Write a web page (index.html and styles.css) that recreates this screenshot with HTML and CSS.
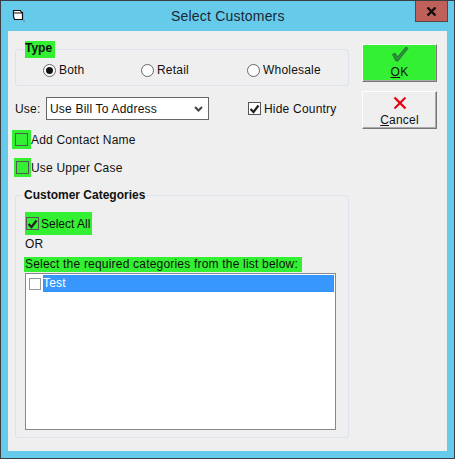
FILE: index.html
```html
<!DOCTYPE html>
<html lang="en">
<head>
<meta charset="utf-8">
<title>Select Customers</title>
<link rel="stylesheet" href="styles.css">
</head>
<body>
<div class="window">
  <header class="titlebar">
    <svg class="app-icon" width="13" height="13" viewBox="0 0 13 13"><path d="M1.500 1.500h7l1 2h1v7h-8l-1-3z" fill="#fff" stroke="#111" stroke-width="1.200"/><path d="M2 4h8" stroke="#111"/><path d="M12 11v2" stroke="#777"/></svg>
    <span class="title">Select Customers</span>
    <span class="close"><svg width="11" height="9" viewBox="0 0 11 9"><path d="M1.500 .5l8 8M9.500 .5l-8 8" stroke="#111" stroke-width="2.400"/></svg></span>
  </header>
  <div class="client">
    <main class="left">
      <section class="group type-group">
        <div class="legend green type-legend">Type</div>
        <div class="radios">
          <span class="radio-item r1"><i class="radio on"></i>Both</span>
          <span class="radio-item r2"><i class="radio"></i>Retail</span>
          <span class="radio-item r3"><i class="radio"></i>Wholesale</span>
        </div>
      </section>
      <div class="use-row">
        <span class="use-label">Use:</span>
        <span class="select">Use Bill To Address<svg width="9" height="6" viewBox="0 0 9 6"><path d="M1 1l3.500 3.500L8 1" fill="none" stroke="#444" stroke-width="2"/></svg></span>
        <span class="check-item hide"><i class="check"><svg width="11" height="10" viewBox="0 0 11 10"><path d="M1.500 5l3 3 5-6.500" fill="none" stroke="#222" stroke-width="2.200"/></svg></i>Hide Country</span>
      </div>
      <div class="opt opt1"><span class="green swatch s1"><i class="check clear"></i></span>Add Contact Name</div>
      <div class="opt opt2"><span class="green swatch s2"><i class="check clear"></i></span>Use Upper Case</div>
      <section class="group cat-group">
        <div class="legend cat-legend">Customer Categories</div>
        <div class="green select-all"><i class="check clear"><svg width="11" height="10" viewBox="0 0 11 10"><path d="M1.500 5l3 3 5-6.500" fill="none" stroke="#222" stroke-width="2.200"/></svg></i>Select All</div>
        <div class="or">OR</div>
        <div class="green hint">Select the required categories from the list below:</div>
        <div class="list">
          <div class="list-row"><i class="list-check"></i><span class="list-text">Test</span></div>
        </div>
      </section>
    </main>
    <aside class="right">
      <button class="btn ok"><svg width="18" height="16" viewBox="0 0 18 16"><path d="M1.500 8.500L4 7l2.500 4L15 1l2 1.500L7 15H5z" fill="#2f8f3a" stroke="#1d6b2c" stroke-width=".8"/></svg><span><u>O</u>K</span></button>
      <button class="btn cancel"><svg width="14" height="14" viewBox="0 0 14 14"><path d="M1.500 1.500l11 11" stroke="#f00010" stroke-width="2.400"/><path d="M12.500 1.500l-11 11" stroke="#e00010" stroke-width="2"/></svg><span><u>C</u>ancel</span></button>
    </aside>
  </div>
</div>
</body>
</html>
```
FILE: styles.css
```css
* { box-sizing: border-box; }
html, body { margin: 0; padding: 0; }
body { width: 455px; height: 459px; overflow: hidden; font: 12px/14px "Liberation Sans", Arial, sans-serif; color: #111; letter-spacing: .2px; }
i { display: block; flex: none; }
.window { width: 455px; height: 459px; background: #66cbea; border: 1px solid #3a3f44; display: flex; flex-direction: column; padding: 0 7px 7px; }
.titlebar { height: 30px; flex: none; display: flex; align-items: center; position: relative; }
.app-icon { margin: -1px 0 0 4px; }
.title { position: absolute; left: 163px; top: 6px; font-size: 14px; line-height: 18px; letter-spacing: .2px; color: #1a2733; }
.close { position: absolute; right: -7px; top: 0; margin-right: 6px; width: 33px; height: 21px; background: #c0605a; border: 1px solid #5c4440; border-top: 0; display: flex; align-items: center; justify-content: center; }
.client { flex: 1; background: #efefef; display: flex; padding: 10px 10px 0 7px; }
.left { width: 334px; flex: none; display: flex; flex-direction: column; }
.right { margin-left: 13px; padding-top: 3px; display: flex; flex-direction: column; gap: 9px; }
.group { border: 1px solid #dce3ea; border-radius: 3px; width: 334px; }
.type-group { height: 37px; margin-top: 8px; position: relative; }
.legend { position: absolute; font-weight: 700; letter-spacing: 0; }
.green { background: #33f033; }
.type-legend { left: 9px; top: -9px; width: 30px; height: 17px; line-height: 15px; }
.radios { display: flex; padding: 13px 0 0 27px; }
.radio-item { display: flex; align-items: center; }
.r1 { width: 98px; }
.r2 { width: 106px; }
.radio { width: 13px; height: 13px; border: 1px solid #666; border-radius: 50%; background: #fff; margin-right: 3px; position: relative; }
.radio.on::after { content: ""; position: absolute; left: 2px; top: 2px; width: 7px; height: 7px; border-radius: 50%; background: #111; }
.use-row { display: flex; align-items: center; margin-top: 11px; height: 23px; }
.use-label { width: 31px; }
.select { width: 163px; height: 23px; background: #fff; border: 1px solid #666; display: flex; align-items: center; justify-content: space-between; padding: 0 5px 0 3px; }
.hide { margin-left: 39px; }
.check-item { display: flex; align-items: center; }
.check { width: 13px; height: 13px; border: 1px solid #555; background: #fff; margin-right: 3px; display: flex; align-items: center; justify-content: center; }
.check.clear { background: transparent; }
.opt { display: flex; align-items: center; height: 19px; margin-left: -3px; }
.opt1 { margin-top: 10px; }
.opt2 { margin-top: 9px; }
.swatch { height: 19px; display: flex; align-items: center; justify-content: center; flex: none; }
.swatch .check { margin: 0; }
.s1 { width: 19px; }
.s2 { width: 17px; margin-left: 2px; }
.cat-group { height: 243px; margin-top: 18px; position: relative; padding: 16px 0 0 9px; }
.cat-legend { left: 6px; top: -8px; background: #efefef; padding: 0 2px; }
.select-all { width: 67px; height: 23px; display: flex; align-items: center; padding-left: 1px; white-space: nowrap; letter-spacing: 0; }
.select-all .check { margin-right: 2px; }
.or { margin-top: 1px; height: 21px; line-height: 16px; }
.hint { width: 278px; height: 15px; margin-left: -1px; padding-left: 1px; }
.list { width: 311px; height: 157px; margin-top: 1px; background: #fff; border: 1px solid #888; padding: 1px; }
.list-row { height: 17px; display: flex; align-items: center; padding-left: 2px; }
.list-text { flex: 1; height: 17px; background: #3797fd; outline: 1px dotted #b07030; outline-offset: -1px; color: #fff; padding-left: 0; line-height: 17px; }
.list-check { width: 12px; height: 12px; background: #fff; border: 1px solid #999; margin-right: 2px; }
.btn { width: 75px; border: 1px solid; border-color: #fff #777 #777 #fff; box-shadow: inset -1px -1px 0 #aaa; background: #efefef; font: inherit; letter-spacing: inherit; color: #111; padding: 1px 0 0; display: flex; flex-direction: column; align-items: center; }
.btn span { margin-top: 3px; }
.ok { height: 38px; background: #33f033; }
.cancel { height: 38px; padding-top: 4px; }
```
